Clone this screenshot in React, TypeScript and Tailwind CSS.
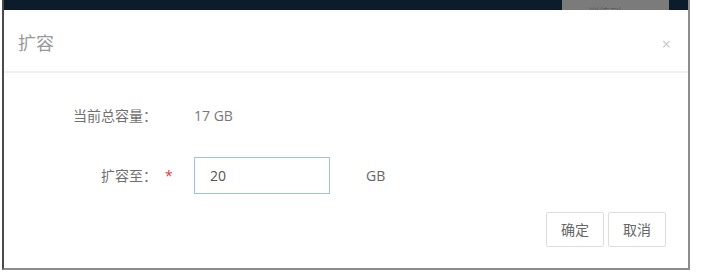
import { useState } from 'react';

export default function App() {
  const [size, setSize] = useState('20');

  return (
    <main
      className="w-[706px] h-[278px] bg-white overflow-hidden"
      style={{ fontFamily: '"Open Sans", "Noto Sans CJK SC", sans-serif' }}
    >
      {/* 背景页面 + 弹窗 */}
      <div className="ml-[2px] w-[688px] h-[270px] flex flex-col bg-[#0c1c2b] border-l-2 border-[#4a4a4a] border-r-2 border-r-[#8c8c8c] border-b-2 border-b-[#8c8c8c]">
        {/* 顶部遮罩条 */}
        <div className="h-[10px] flex justify-end pr-[19px] overflow-hidden">
          <div className="w-[107px] h-[10px] bg-[#7b7b7b] text-[11px] leading-[14px] text-[#5e5e5e] pl-[26px] pt-[6px]">
            训练列
          </div>
        </div>

        {/* 弹窗 */}
        <section className="flex-1 flex flex-col bg-white">
          {/* 头部 */}
          <div className="h-[63px] flex items-center justify-between pl-[14px] pr-[17px] pt-[6px] border-b-2 border-[#f0f0f0]">
            <h1 className="text-[18px] text-[#999999]">扩容</h1>
            <button type="button" className="text-[16px] text-[#c8c8c8] leading-none">
              ×
            </button>
          </div>

          {/* 表单 */}
          <div className="flex flex-col text-[14px] pt-[30px]">
            <div className="flex items-center h-[24px]">
              <label className="w-[153px] text-right text-[#707070]">当前总容量：</label>
              <span className="w-[37px]" />
              <span className="text-[#777777]">17 GB</span>
            </div>

            <div className="flex items-center mt-[30px]">
              <label className="w-[153px] text-right text-[#707070]">扩容至：</label>
              <span className="w-[37px] pl-[8px] text-[#e4393c]">*</span>
              <input
                value={size}
                onChange={(e) => setSize(e.target.value)}
                className="w-[136px] h-[37px] px-[15px] border border-[#9cc0e6] outline-none text-[14px] text-[#555555]"
              />
              <span className="ml-[36px] text-[#666666]">GB</span>
            </div>
          </div>

          {/* 底部按钮 */}
          <div className="flex justify-end gap-[4px] pr-[22px] mt-[18px]">
            <button
              type="button"
              className="w-[58px] h-[35px] rounded-[2px] border border-[#dddddd] text-[14px] text-[#666666] bg-white"
            >
              确定
            </button>
            <button
              type="button"
              className="w-[58px] h-[35px] rounded-[2px] border border-[#dddddd] text-[14px] text-[#666666] bg-white"
            >
              取消
            </button>
          </div>
        </section>
      </div>
    </main>
  );
}
